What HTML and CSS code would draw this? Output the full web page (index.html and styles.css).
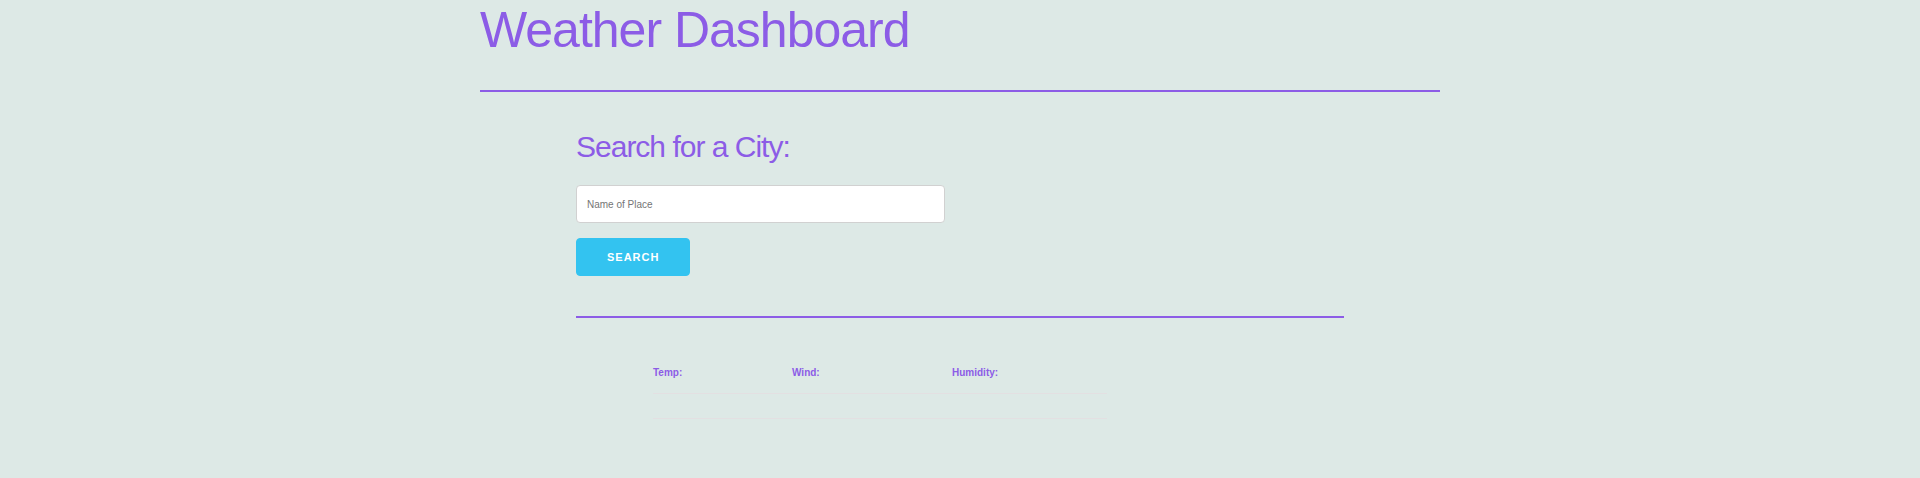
FILE: index.html
```html
<!DOCTYPE html>
<html lang="en">
<head>
<meta charset="utf-8">
<title>Weather Dashboard</title>
<link rel="stylesheet" href="styles.css">
</head>
<body>
<div class="container">
  <header class="header">
    <h1 class="title">Weather Dashboard</h1>
  </header>
  <hr class="rule">
  <section class="search">
    <h4 class="search-title">Search for a City:</h4>
    <form class="search-form">
      <input class="search-input" type="text" placeholder="Name of Place">
      <button class="search-btn" type="button">Search</button>
    </form>
    <hr class="rule rule-inner">
    <table class="weather-table">
      <colgroup>
        <col class="col-temp">
        <col class="col-wind">
        <col class="col-hum">
      </colgroup>
      <thead>
        <tr><th>Temp:</th><th>Wind:</th><th>Humidity:</th></tr>
      </thead>
      <tbody>
        <tr><td></td><td></td><td></td></tr>
      </tbody>
    </table>
  </section>
</div>
</body>
</html>
```
FILE: styles.css
```css
html, body {
  margin: 0;
  padding: 0;
}
body {
  background: #dde9e6;
  font-family: "Liberation Sans", Arial, sans-serif;
  font-size: 15px;
  line-height: 1.6;
  color: #222;
  height: 478px;
  overflow: hidden;
}
.container {
  width: 960px;
  margin: 0 auto;
}
.title {
  margin: 0;
  font-size: 50px;
  line-height: 60px;
  font-weight: 400;
  letter-spacing: -1px;
  color: #8c5ce6;
}
.rule {
  margin: 30px 0 35px;
  height: 0;
  border: 0;
  border-top: 2px solid #8c5ce6;
}
.search {
  margin-left: 96px;
  width: 768px;
}
.search-title {
  margin: 0 0 18px;
  font-size: 30px;
  line-height: 40px;
  font-weight: 400;
  letter-spacing: -1px;
  color: #8c5ce6;
}
.search-form {
  display: flex;
  flex-direction: column;
  align-items: flex-start;
  gap: 15px;
  margin: 0;
}
.search-input {
  box-sizing: border-box;
  width: 369px;
  height: 38px;
  padding: 6px 10px;
  border: 1px solid #d1d1d1;
  border-radius: 4px;
  background: #fff;
  font-family: "Liberation Sans", Arial, sans-serif;
  font-size: 10px;
  color: #333;
  outline: none;
  margin: 0;
}
.search-input::placeholder {
  color: #757575;
}
.search-btn {
  box-sizing: border-box;
  height: 38px;
  padding: 1px 30px 0;
  margin: 0 0 10px;
  border: 1px solid #33c3f0;
  border-radius: 4px;
  background: #33c3f0;
  color: #fff;
  font-family: "Liberation Sans", Arial, sans-serif;
  font-size: 11px;
  font-weight: 700;
  letter-spacing: 1px;
  text-transform: uppercase;
  line-height: 35px;
  cursor: pointer;
}
.rule-inner {
  margin: 30px 0 35px;
}
.weather-table {
  margin-left: 77px;
  width: 454px;
  table-layout: fixed;
  border-collapse: collapse;
  border-spacing: 0;
}
.col-temp { width: 124px; }
.col-wind { width: 160px; }
.col-hum { width: 170px; }
.weather-table th,
.weather-table td {
  padding: 12px 15px;
  text-align: left;
  border-bottom: 1px solid #e3e0e2;
}
.weather-table th:first-child,
.weather-table td:first-child {
  padding-left: 0;
}
.weather-table th:last-child,
.weather-table td:last-child {
  padding-right: 0;
}
.weather-table th {
  font-size: 10px;
  line-height: 16px;
  font-weight: 700;
  color: #8c5ce6;
}
```
